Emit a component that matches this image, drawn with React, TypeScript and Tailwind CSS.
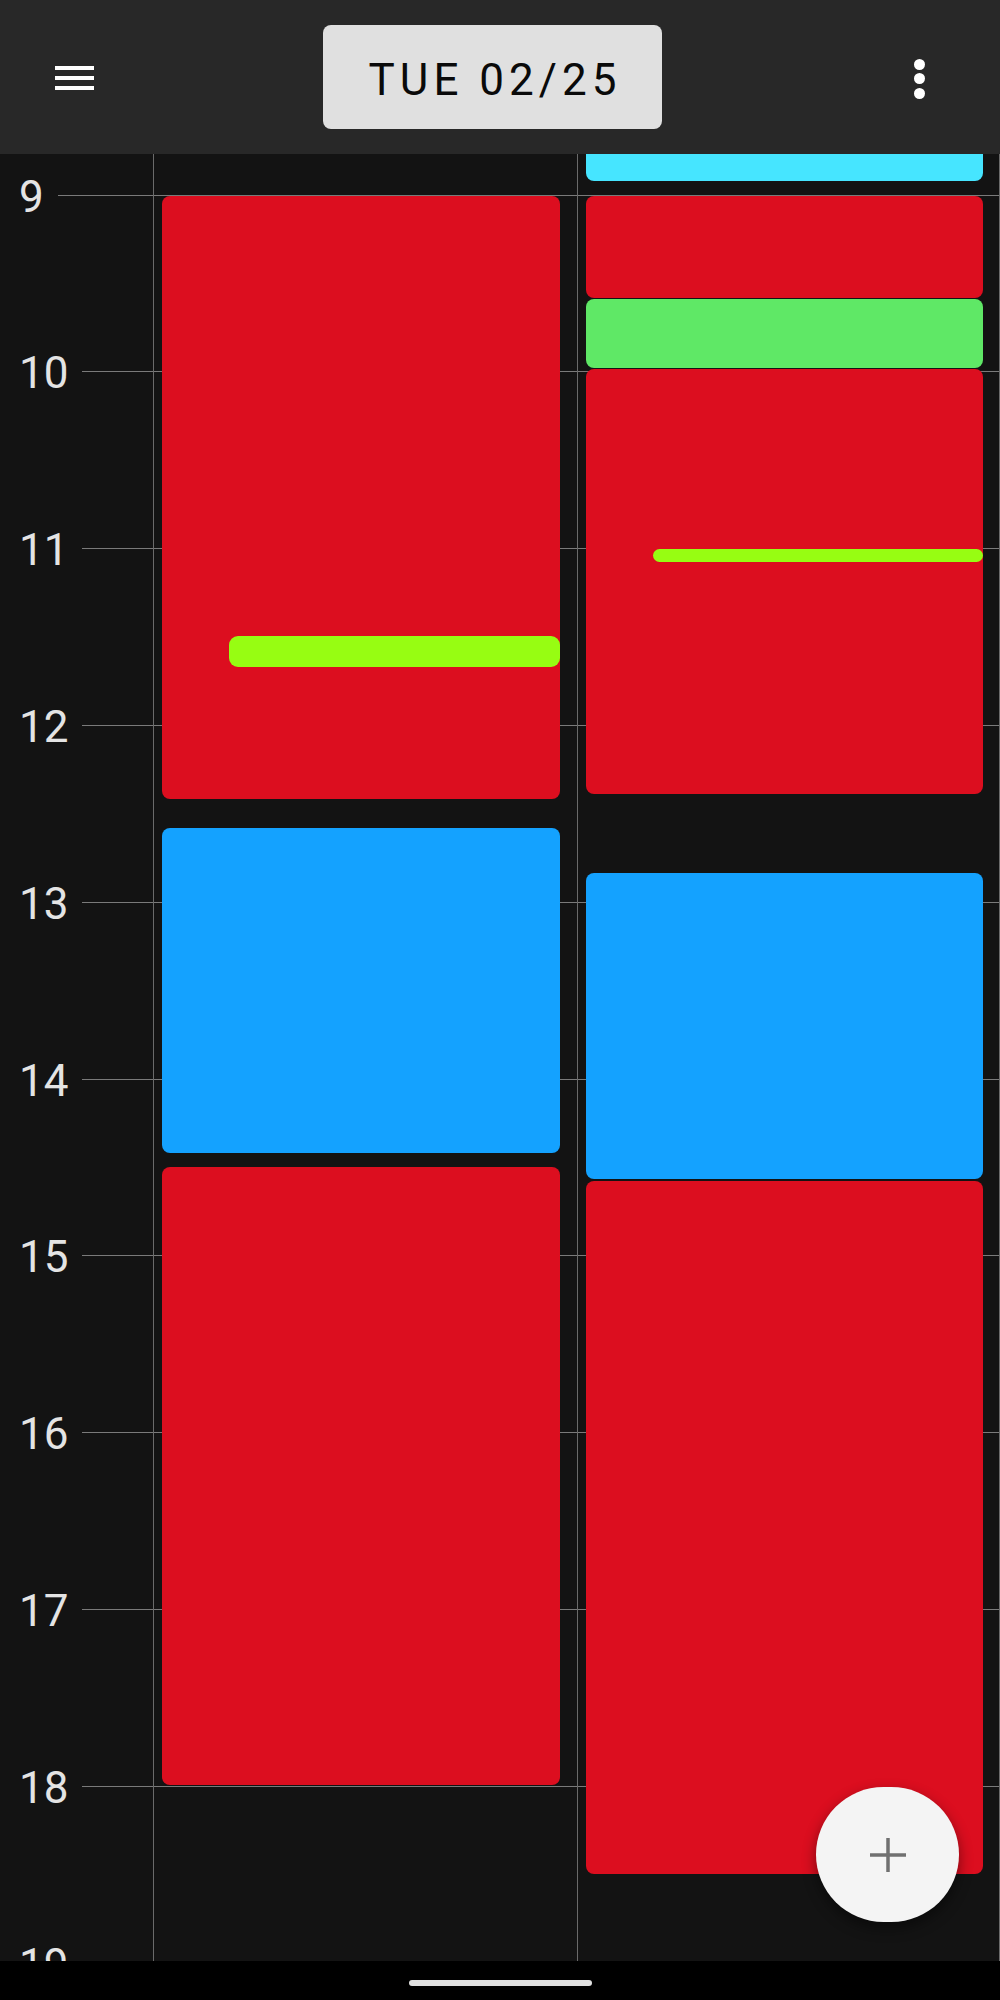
import React from "react";

type Ev = { top: number; h: number; color: string; left: number; right: number; radius: string };

const HOUR_H = 176.83;
const ORIGIN = 41;

const col1: Ev[] = [
  { top: 42, h: 603, color: "#dc0e1f", left: 8, right: 17, radius: "8px" },
  { top: 482, h: 31, color: "#97fd12", left: 75, right: 17, radius: "9px" },
  { top: 674, h: 325, color: "#14a2ff", left: 8, right: 17, radius: "8px" },
  { top: 1013, h: 618, color: "#dc0e1f", left: 8, right: 17, radius: "8px" },
];

const col2: Ev[] = [
  { top: -60, h: 87, color: "#46e5ff", left: 8, right: 16, radius: "8px" },
  { top: 42, h: 102, color: "#dc0e1f", left: 8, right: 16, radius: "8px" },
  { top: 145, h: 69, color: "#5fe866", left: 8, right: 16, radius: "8px" },
  { top: 215, h: 425, color: "#dc0e1f", left: 8, right: 16, radius: "8px" },
  { top: 395, h: 13, color: "#97fd12", left: 75, right: 16, radius: "7px" },
  { top: 719, h: 306, color: "#14a2ff", left: 8, right: 16, radius: "8px" },
  { top: 1027, h: 693, color: "#dc0e1f", left: 8, right: 16, radius: "8px" },
];

const hours = [9, 10, 11, 12, 13, 14, 15, 16, 17, 18, 19];

function Column({ events, last }: { events: Ev[]; last?: boolean }) {
  return (
    <div
      className={
        last
          ? "relative flex-1 border-l border-r border-[#6a6a6a]"
          : "relative w-[424px] border-l border-[#6a6a6a]"
      }
    >
      {events.map((e, i) => (
        <div
          key={i}
          className="absolute"
          style={{
            top: e.top,
            height: e.h,
            left: e.left,
            right: e.right,
            background: e.color,
            borderRadius: e.radius,
          }}
        />
      ))}
    </div>
  );
}

export default function App() {
  return (
    <div
      className="w-[1000px] h-[2000px] flex flex-col bg-black overflow-hidden"
      style={{ fontFamily: "Roboto, 'Noto Sans', sans-serif" }}
    >
      {/* Header */}
      <div className="h-[154px] shrink-0 bg-[#282828] flex items-center pl-[55px] pr-[75px] relative z-10">
        <div className="flex flex-col gap-[6px] mt-[2px]">
          <div className="w-[39px] h-[4px] bg-white" />
          <div className="w-[39px] h-[4px] bg-white" />
          <div className="w-[39px] h-[4px] bg-white" />
        </div>
        <div className="ml-[229px] w-[339px] h-[104px] rounded-[8px] bg-[#e0e0e0] flex items-center justify-center pt-[5px] pl-[5px]">
          <span className="text-[44px] leading-[44px] tracking-[5px] text-[#0a0a0a]">TUE 02/25</span>
        </div>
        <div className="ml-auto flex flex-col gap-[3.5px] mt-[3px]">
          <div className="w-[11px] h-[11px] rounded-full bg-white" />
          <div className="w-[11px] h-[11px] rounded-full bg-white" />
          <div className="w-[11px] h-[11px] rounded-full bg-white" />
        </div>
      </div>

      {/* Grid */}
      <div className="flex-1 relative overflow-hidden bg-[#131313]">
        {/* hour rows */}
        {hours.map((h) => {
          const y = ORIGIN + (h - 9) * HOUR_H;
          return (
            <div
              key={h}
              className="absolute left-0 right-0 h-[44px] flex items-center pl-[19px]"
              style={{ top: y - 22 + 1.5 }}
            >
              <span className="text-[44px] leading-[44px] text-[#e4e4e4]">{h}</span>
              <div className="flex-1 h-px bg-[#7a7a7a] ml-[14px] -mt-[3px]" />
            </div>
          );
        })}
        {/* columns */}
        <div className="absolute inset-0 flex">
          <div className="w-[153px] shrink-0" />
          <Column events={col1} />
          <Column events={col2} last />
        </div>
        {/* FAB */}
        <div className="absolute right-[41px] bottom-[39px] w-[143px] h-[135px] rounded-full bg-[#f4f4f4] shadow-[0_6px_14px_rgba(0,0,0,0.45)] flex items-center justify-center">
          <svg width="38" height="36" viewBox="0 0 38 36">
            <path d="M19 1 V35 M1 18 H37" stroke="#707070" strokeWidth="3.5" fill="none" />
          </svg>
        </div>
      </div>

      {/* Nav bar */}
      <div className="h-[39px] shrink-0 bg-black flex justify-center pt-[19px]">
        <div className="w-[183px] h-[6px] rounded-full bg-[#e0e0e0]" />
      </div>
    </div>
  );
}
